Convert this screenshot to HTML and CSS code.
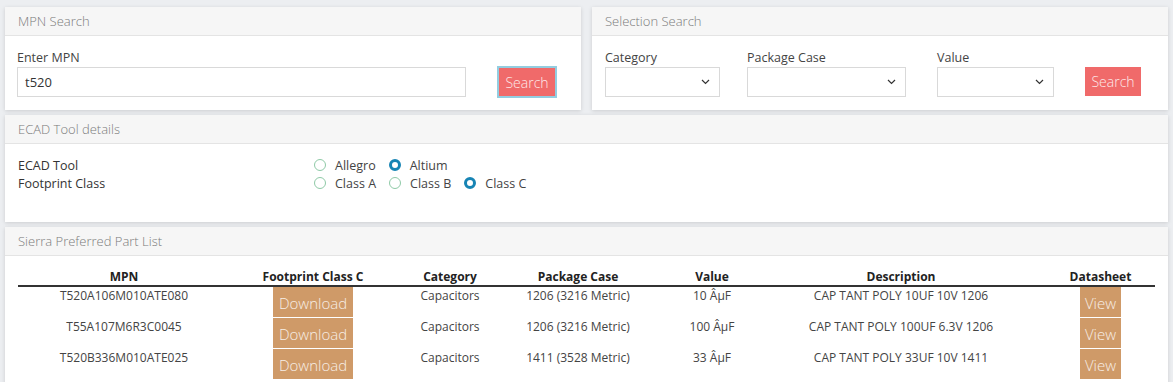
FILE: index.html
```html
<!DOCTYPE html>
<html lang="en">
<head>
    <meta charset="UTF-8">
    <title>Part Search</title>
    <link rel="stylesheet" href="styles.css">
</head>
<body>
    <div class="page">
        <div class="top-row">
            <div class="card">
                <div class="card-header">MPN Search</div>
                <div class="card-body mpn-body">
                    <div class="field mpn-field">
                        <label>Enter MPN</label>
                        <input type="text" class="text-input" value="t520">
                    </div>
                    <button class="btn-search focused">Search</button>
                </div>
            </div>
            <div class="card">
                <div class="card-header">Selection Search</div>
                <div class="card-body sel-body">
                    <div class="field cat-field">
                        <label>Category</label>
                        <div class="select"><svg width="9" height="6" viewBox="0 0 9 6"><path d="M1 1 L4.5 4.5 L8 1" fill="none" stroke="#333" stroke-width="1.2"/></svg></div>
                    </div>
                    <div class="field pkg-field">
                        <label>Package Case</label>
                        <div class="select"><svg width="9" height="6" viewBox="0 0 9 6"><path d="M1 1 L4.5 4.5 L8 1" fill="none" stroke="#333" stroke-width="1.2"/></svg></div>
                    </div>
                    <div class="field val-field">
                        <label>Value</label>
                        <div class="select"><svg width="9" height="6" viewBox="0 0 9 6"><path d="M1 1 L4.5 4.5 L8 1" fill="none" stroke="#333" stroke-width="1.2"/></svg></div>
                    </div>
                    <button class="btn-search">Search</button>
                </div>
            </div>
        </div>

        <div class="card">
            <div class="card-header">ECAD Tool details</div>
            <div class="card-body ecad-body">
                <div class="ecad-label">ECAD Tool</div>
                <div class="radio-row">
                    <label class="radio"><input type="radio" name="tool"> Allegro</label>
                    <label class="radio"><input type="radio" name="tool" checked> Altium</label>
                </div>
                <div class="ecad-label">Footprint Class</div>
                <div class="radio-row">
                    <label class="radio"><input type="radio" name="fpclass"> Class A</label>
                    <label class="radio"><input type="radio" name="fpclass"> Class B</label>
                    <label class="radio"><input type="radio" name="fpclass" checked> Class C</label>
                </div>
            </div>
        </div>

        <div class="card">
            <div class="card-header">Sierra Preferred Part List</div>
            <div class="card-body list-body">
                <table class="parts">
                    <colgroup>
                        <col class="c-mpn"><col class="c-fp"><col class="c-cat"><col class="c-pkg"><col class="c-val"><col class="c-desc"><col class="c-ds">
                    </colgroup>
                    <thead>
                        <tr>
                            <th>MPN</th>
                            <th>Footprint Class C</th>
                            <th>Category</th>
                            <th>Package Case</th>
                            <th>Value</th>
                            <th>Description</th>
                            <th class="ds">Datasheet</th>
                        </tr>
                    </thead>
                    <tbody>
                        <tr>
                            <td>T520A106M010ATE080</td>
                            <td><span class="btn-brown dl">Download</span></td>
                            <td>Capacitors</td>
                            <td>1206 (3216 Metric)</td>
                            <td>10 ÂµF</td>
                            <td>CAP TANT POLY 10UF 10V 1206</td>
                            <td class="ds"><span class="btn-brown">View</span></td>
                        </tr>
                        <tr>
                            <td>T55A107M6R3C0045</td>
                            <td><span class="btn-brown dl">Download</span></td>
                            <td>Capacitors</td>
                            <td>1206 (3216 Metric)</td>
                            <td>100 ÂµF</td>
                            <td>CAP TANT POLY 100UF 6.3V 1206</td>
                            <td class="ds"><span class="btn-brown">View</span></td>
                        </tr>
                        <tr>
                            <td>T520B336M010ATE025</td>
                            <td><span class="btn-brown dl">Download</span></td>
                            <td>Capacitors</td>
                            <td>1411 (3528 Metric)</td>
                            <td>33 ÂµF</td>
                            <td>CAP TANT POLY 33UF 10V 1411</td>
                            <td class="ds"><span class="btn-brown">View</span></td>
                        </tr>
                    </tbody>
                </table>
            </div>
        </div>
    </div>
</body>
</html>
```

FILE: styles.css
```css
body {
    margin: 0;
    background: #eceef1;
    font-family: "Open Sans", "Liberation Sans", sans-serif;
    color: #333;
    font-size: 12px;
}
.page {
    padding: 7px 5px 0;
    display: flex;
    flex-direction: column;
    gap: 5px;
}
.top-row {
    display: grid;
    grid-template-columns: 1fr 1fr;
    gap: 11px;
}
.card {
    background: #fff;
    box-shadow: 0 1px 4px rgba(0, 0, 0, 0.14);
}
.card-header {
    height: 28px;
    line-height: 28px;
    padding: 0 13px;
    background: #f6f6f6;
    border-bottom: 1px solid #e4e4e4;
    color: #7b7b7b;
    font-size: 13px;
    font-weight: 300;
}
.card-body {
    padding: 14px 13px 13px;
}
.field label {
    display: block;
    height: 16px;
    line-height: 16px;
    margin-bottom: 1px;
    color: #444;
    font-size: 12.5px;
}
.mpn-body {
    display: flex;
    align-items: flex-end;
    padding-left: 12px;
}
.mpn-field { width: 449px; }
.text-input {
    display: block;
    box-sizing: border-box;
    width: 100%;
    height: 30px;
    border: 1px solid #d9d9d9;
    padding: 0 7px;
    font-family: inherit;
    font-size: 13px;
    color: #333;
    outline: none;
}
.btn-search {
    height: 28px;
    width: 56px;
    margin-left: 33px;
    margin-bottom: 1px;
    background: #f06a6a;
    border: none;
    color: #fde9e9;
    font-family: inherit;
    font-size: 14px;
    font-weight: 300;
    padding: 0;
}
.btn-search.focused {
    outline: 2px solid #93cde0;
}
.sel-body {
    display: flex;
    align-items: flex-end;
}
.select {
    box-sizing: border-box;
    height: 30px;
    border: 1px solid #d9d9d9;
    display: flex;
    align-items: center;
    justify-content: flex-end;
    padding-right: 9px;
}
.cat-field { width: 115px; }
.pkg-field { width: 159px; margin-left: 27px; }
.val-field { width: 117px; margin-left: 31px; }
.sel-body .btn-search { margin-left: 31px; height: 29px; }

.ecad-body {
    display: grid;
    grid-template-columns: 296px 1fr;
    grid-auto-rows: 18px;
    align-content: start;
    align-items: center;
    padding-top: 12px;
    height: 53px;
    font-size: 12.5px;
}
.ecad-label { color: #333; }
.radio-row {
    display: flex;
    gap: 13px;
}
.radio {
    display: flex;
    align-items: center;
    gap: 9px;
    color: #444;
}
.radio input {
    appearance: none;
    margin: 0;
    width: 12px;
    height: 12px;
    border-radius: 50%;
    border: 1px solid #8fcaa7;
    background: #fff;
    box-sizing: border-box;
}
.radio input:checked {
    border: 3.5px solid #1784b4;
}

.list-body {
    padding: 12px 13px 20px;
}
.parts {
    width: 100%;
    border-collapse: collapse;
    table-layout: fixed;
}
.c-mpn { width: 212px; }
.c-fp { width: 166px; }
.c-cat { width: 108px; }
.c-pkg { width: 148px; }
.c-val { width: 120px; }
.c-desc { width: 258px; }
.parts th {
    font-size: 12px;
    font-weight: 700;
    color: #222;
    height: 17px;
    padding: 0;
    border-bottom: 2px solid #333;
    text-align: center;
}
.parts td {
    padding: 0 0 1px;
    height: 30px;
    text-align: center;
    vertical-align: top;
    color: #444;
    font-size: 12px;
    line-height: 17px;
}
.parts .ds { padding-left: 16px; }
.btn-brown {
    display: inline-block;
    height: 30px;
    line-height: 32px;
    padding: 0 5px;
    background: #cf9a68;
    color: #f7eee6;
    font-size: 15px;
    font-weight: 300;
}
.btn-brown.dl { width: 70px; }
```
